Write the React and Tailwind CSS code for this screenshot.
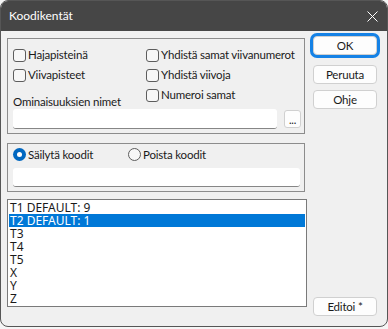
import React from "react";

function Check({ label }) {
  return (
    <div className="flex items-center h-[20px] whitespace-nowrap">
      <span className="w-[13px] h-[13px] rounded-[3px] border border-[#5d5d5d] bg-[#f7f7f7] shrink-0" />
      <span className="ml-[2px] leading-[14px]">{label}</span>
    </div>
  );
}

function Radio({ label, checked }) {
  return (
    <div className="flex items-center h-[13px] whitespace-nowrap">
      {checked ? (
        <span className="w-[13px] h-[13px] rounded-full bg-[#0067c0] flex items-center justify-center shrink-0">
          <span className="w-[5px] h-[5px] rounded-full bg-white" />
        </span>
      ) : (
        <span className="w-[13px] h-[13px] rounded-full border border-[#5d5d5d] bg-[#f7f7f7] shrink-0" />
      )}
      <span className="ml-[2px] leading-[14px]">{label}</span>
    </div>
  );
}

function Button({ children, focused }) {
  return (
    <button
      className={
        "w-[64px] h-[19px] rounded-[4px] border border-[#d0d0d0] bg-[#fdfdfd] leading-[17px] text-[#1a1a1a] " +
        (focused ? "ring-[3px] ring-[#1582e6]" : "")
      }
    >
      {children}
    </button>
  );
}

const rows = ["T1 DEFAULT: 9", "T2 DEFAULT: 1", "T3", "T4", "T5", "X", "Y", "Z"];

export default function App() {
  return (
    <div className="w-[388px] h-[329px] bg-[#f5f5f5] font-['Lato',sans-serif] text-[11.5px] tracking-[-0.2px] text-[#1a1a1a]">
      <div className="h-[327px] rounded-[8px] border border-[#565656] overflow-hidden flex flex-col bg-[#f0f0f0]">
        <div className="h-[30px] bg-[#464646] flex items-center justify-between pl-[8px] pr-[9px] shrink-0">
          <span className="text-white text-[12px] tracking-normal">Koodikentät</span>
          <svg width="11" height="11" viewBox="0 0 11 11">
            <path d="M0.5 0.5 L10.5 10.5 M10.5 0.5 L0.5 10.5" stroke="#ffffff" strokeWidth="1" />
          </svg>
        </div>

        <div className="flex pl-[6px] pt-[7px]">
          <div className="flex flex-col w-[300px]">
            <div className="w-[298px] h-[96px] border border-[#8c8c8c] pt-[6px] pl-[5px] pr-[3px] pb-[4px]">
              <div className="flex items-start">
                <div className="w-[133px] flex flex-col">
                  <Check label="Hajapisteinä" />
                  <Check label="Viivapisteet" />
                  <div className="mt-[9px] h-[15px] leading-[15px] whitespace-nowrap">Ominaisuuksien nimet</div>
                </div>
                <div className="flex flex-col">
                  <Check label="Yhdistä samat viivanumerot" />
                  <Check label="Yhdistä viivoja" />
                  <Check label="Numeroi samat" />
                </div>
              </div>
              <div className="flex items-start">
                <div className="w-[264px] h-[20px] bg-white rounded-[3px] border-b border-[#868686]" />
                <div className="ml-[7px] mt-[1px] w-[17px] h-[18px] rounded-[3px] border border-[#d0d0d0] bg-[#fdfdfd] text-[11px] leading-[18px] text-center">
                  ...
                </div>
              </div>
            </div>

            <div className="mt-[9px] w-[298px] h-[49px] border border-[#8c8c8c] pt-[4px] pl-[5px]">
              <div className="flex h-[20px] items-start">
                <div className="w-[115px]">
                  <Radio label="Säilytä koodit" checked />
                </div>
                <Radio label="Poista koodit" />
              </div>
              <div className="w-[287px] h-[19px] bg-white rounded-[3px] border-b border-[#868686]" />
            </div>

            <div className="mt-[7px] w-[300px] h-[108px] border border-[#7a7a7a] bg-white p-[1px] font-['Noto_Sans',sans-serif] text-[12px] tracking-normal">
              {rows.map((r, i) => (
                <div
                  key={r}
                  className={
                    "h-[13px] leading-[13px] pl-[1px] whitespace-pre " +
                    (i === 1 ? "bg-[#0078d7] text-white" : "")
                  }
                >
                  {r}
                </div>
              ))}
            </div>
          </div>

          <div className="ml-[6px] flex flex-col">
            <div className="mt-[-2px]">
              <Button focused>OK</Button>
            </div>
            <div className="mt-[10px]">
              <Button>Peruuta</Button>
            </div>
            <div className="mt-[6px]">
              <Button>Ohje</Button>
            </div>
            <div className="mt-[188px]">
              <Button>Editoi *</Button>
            </div>
          </div>
        </div>
      </div>
    </div>
  );
}
